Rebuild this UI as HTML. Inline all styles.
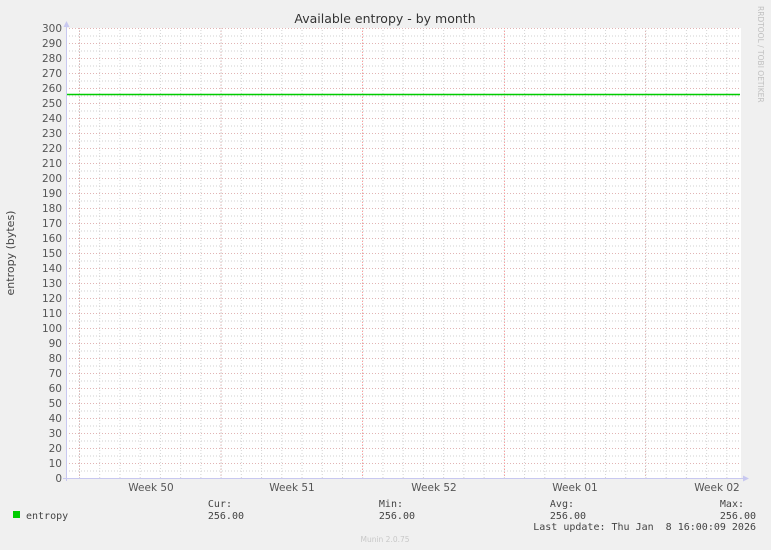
<!DOCTYPE html>
<html><head><meta charset="utf-8"><style>
html,body{margin:0;padding:0;background:#f0f0f0;}
svg{display:block}
</style></head><body>
<svg width="771" height="550" xmlns="http://www.w3.org/2000/svg" font-family="DejaVu Sans, Liberation Sans, sans-serif">
<defs>
<pattern id="hg" patternUnits="userSpaceOnUse" x="0" y="28" width="771" height="15">
<line x1="0" y1="0.5" x2="771" y2="0.5" stroke="#e2b4b4" stroke-dasharray="1,2"/>
<line x1="0" y1="8" x2="771" y2="8" stroke="#d0d0d0" stroke-dasharray="1,2"/>
</pattern>
<pattern id="vg" patternUnits="userSpaceOnUse" x="79" y="0" width="20.23" height="550">
<line x1="0.5" y1="0" x2="0.5" y2="550" stroke="#d4d4d4" stroke-dasharray="1,2"/>
</pattern>
</defs>
<rect x="0" y="0" width="771" height="550" fill="#f0f0f0"/>
<rect x="67" y="28" width="674" height="450" fill="#fff"/>
<rect x="67" y="28" width="674" height="450" fill="url(#vg)"/>
<rect x="67" y="28" width="674" height="450" fill="url(#hg)"/>
<g stroke="#e2b4b4" stroke-dasharray="1,2">
<line x1="79.5" y1="28" x2="79.5" y2="478"/>
<line x1="221" y1="28" x2="221" y2="478"/>
<line x1="645.5" y1="28" x2="645.5" y2="478"/>
</g>
<g stroke="#ff9a9a" stroke-dasharray="1,2">
<line x1="362.5" y1="28" x2="362.5" y2="478"/>
<line x1="504.5" y1="28" x2="504.5" y2="478"/>
</g>
<line x1="67" y1="94.5" x2="740" y2="94.5" stroke="#00cc00" stroke-width="1.5"/>
<g stroke="#c8c8f0">
<line x1="66.5" y1="24" x2="66.5" y2="481"/>
<line x1="63" y1="478.5" x2="744" y2="478.5"/>
</g>
<polygon points="63.5,27 69.5,27 66.5,21" fill="#c8c8f0"/>
<polygon points="743,475.5 743,481.5 749,478.5" fill="#c8c8f0"/>
<text x="385" y="23" text-anchor="middle" font-size="12.5" fill="#333">Available entropy - by month</text>
<g font-size="10.5" fill="#555" text-anchor="end">
<text x="62" y="32">300</text><text x="62" y="47">290</text><text x="62" y="62">280</text><text x="62" y="77">270</text><text x="62" y="92">260</text><text x="62" y="107">250</text><text x="62" y="122">240</text><text x="62" y="137">230</text><text x="62" y="152">220</text><text x="62" y="167">210</text><text x="62" y="182">200</text><text x="62" y="197">190</text><text x="62" y="212">180</text><text x="62" y="227">170</text><text x="62" y="242">160</text><text x="62" y="257">150</text><text x="62" y="272">140</text><text x="62" y="287">130</text><text x="62" y="302">120</text><text x="62" y="317">110</text><text x="62" y="332">100</text><text x="62" y="347">90</text><text x="62" y="362">80</text><text x="62" y="377">70</text><text x="62" y="392">60</text><text x="62" y="407">50</text><text x="62" y="422">40</text><text x="62" y="437">30</text><text x="62" y="452">20</text><text x="62" y="467">10</text><text x="62" y="482">0</text>
</g>
<g font-size="10.5" fill="#555" text-anchor="middle">
<text x="151" y="491">Week 50</text><text x="292" y="491">Week 51</text><text x="434" y="491">Week 52</text><text x="575" y="491">Week 01</text><text x="717" y="491">Week 02</text>
</g>
<text transform="translate(14,253) rotate(-90)" text-anchor="middle" font-size="11" fill="#444">entropy (bytes)</text>
<text transform="translate(758,6) rotate(90)" font-size="7.5" fill="#c0c0c0">RRDTOOL / TOBI OETIKER</text>
<g font-family="DejaVu Sans Mono, Liberation Mono, monospace" font-size="10" fill="#444">
<rect x="13" y="511" width="7" height="7" fill="#00cc00"/>
<text x="26" y="519">entropy</text>
<text x="232" y="507" text-anchor="end">Cur:</text>
<text x="244" y="519" text-anchor="end">256.00</text>
<text x="403" y="507" text-anchor="end">Min:</text>
<text x="415" y="519" text-anchor="end">256.00</text>
<text x="574" y="507" text-anchor="end">Avg:</text>
<text x="586" y="519" text-anchor="end">256.00</text>
<text x="744" y="507" text-anchor="end">Max:</text>
<text x="756" y="519" text-anchor="end">256.00</text>
<text x="756" y="530" text-anchor="end" xml:space="preserve">Last update: Thu Jan  8 16:00:09 2026</text>
</g>
<text x="385" y="542" text-anchor="middle" font-size="7.5" fill="#c8c8c8">Munin 2.0.75</text>
</svg>
</body></html>
